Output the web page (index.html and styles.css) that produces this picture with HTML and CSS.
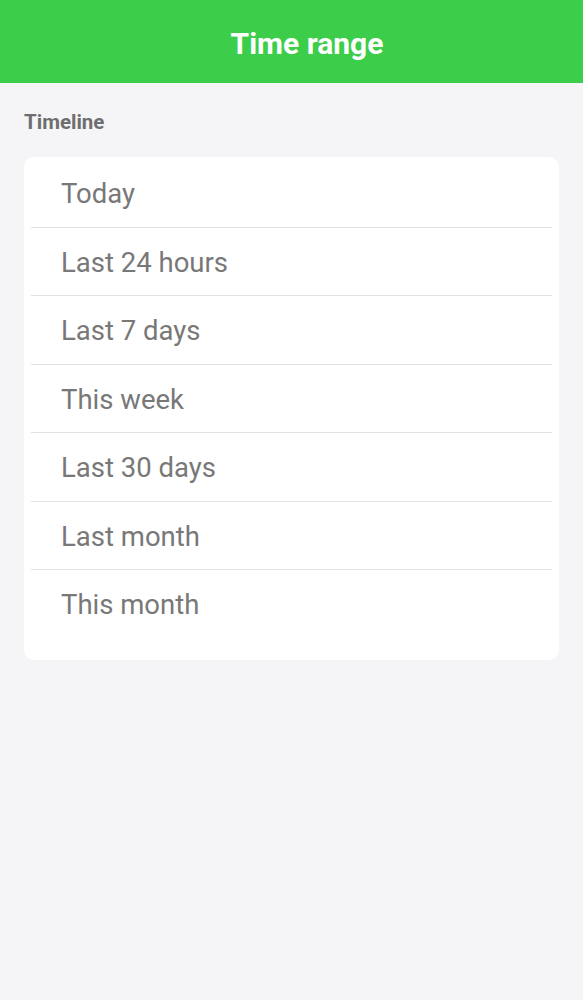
FILE: index.html
```html
<!DOCTYPE html>
<html lang="en">
  <head>
    <meta charset="UTF-8" />
    <meta name="viewport" content="width=device-width, initial-scale=1.0" />
    <title>Time range</title>
    <link rel="stylesheet" href="styles.css">
  </head>
  <body>
    <header class="topbar">
      <h1>Time range</h1>
    </header>
    <main class="content">
      <h2 class="section-title">Timeline</h2>
      <ul class="range-list">
        <li class="range-item">Today</li>
        <li class="range-item">Last 24 hours</li>
        <li class="range-item">Last 7 days</li>
        <li class="range-item">This week</li>
        <li class="range-item">Last 30 days</li>
        <li class="range-item">Last month</li>
        <li class="range-item">This month</li>
      </ul>
    </main>
  </body>
</html>
```

FILE: styles.css
```css
body {
  margin: 0;
  min-height: 100vh;
  background-color: #f5f5f7;
  font-family: Roboto, "Liberation Sans", sans-serif;
}
.topbar {
  height: 83px;
  box-sizing: border-box;
  padding: 4px 0 0 31px;
  display: flex;
  justify-content: center;
  align-items: center;
  background-color: #3ccd4a;
}
.topbar h1 {
  margin: 0;
  color: white;
  font-size: 30px;
  font-weight: bold;
}
.content {
  padding: 27px 24px;
}
.section-title {
  margin: 0 0 23px;
  font-size: 20.5px;
  font-weight: bold;
  color: #6e6e6e;
}
.range-list {
  list-style: none;
  margin: 0;
  padding: 2px 0 22px;
  background-color: white;
  border-radius: 10px;
}
.range-item {
  margin: 0 7px;
  padding: 19px 30px 17px;
  line-height: 31.5px;
  font-size: 27.5px;
  color: #787878;
  border-bottom: 1px solid #e2e2e2;
}
.range-item:last-child {
  border-bottom: none;
}
```
